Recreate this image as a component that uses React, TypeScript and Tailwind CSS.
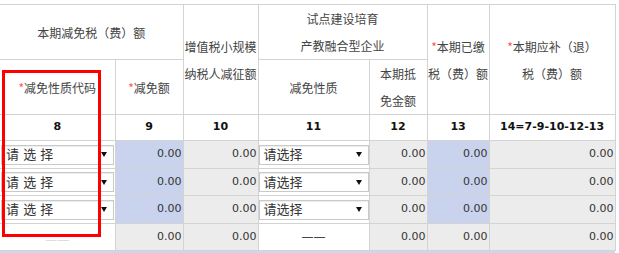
import React from 'react';

const line = 'border border-[#d3d3d3]';
const head = `${line} bg-white text-center align-middle font-normal text-[12px] leading-[27px] text-[#444]`;
const num = `${line} bg-white text-center align-middle font-bold text-[11px] text-[#111]`;
const money = 'text-right align-middle text-[11px] text-[#333] pr-[1px]';

function Star() {
    return <span className="text-[#f55]">*</span>;
}

function FakeSelect({ label }: { label: string }) {
    return (
        <div className="flex items-center justify-between h-[20px] bg-white border border-[#c9c9c9] shadow-[inset_0_1px_1px_rgba(0,0,0,0.08)] pl-[4px] pr-[6px]">
            <span className="text-[13px] leading-none text-[#333] whitespace-pre">{label}</span>
            <svg width="6" height="5" viewBox="0 0 6 5">
                <path d="M0 0 L6 0 L3 5 Z" fill="#111" />
            </svg>
        </div>
    );
}

const dataRows = [0, 1, 2];

export default function App() {
    return (
        <div
            className="relative w-[619px] h-[253px] bg-white pt-[4px] overflow-hidden"
            style={{ fontFamily: '"DejaVu Sans", "Noto Sans CJK SC", sans-serif' }}
        >
            <table className="table-fixed border-collapse w-[615px]">
                <colgroup>
                    <col className="w-[115px]" />
                    <col className="w-[68px]" />
                    <col className="w-[75px]" />
                    <col className="w-[111px]" />
                    <col className="w-[58px]" />
                    <col className="w-[62px]" />
                    <col className="w-[126px]" />
                </colgroup>
                <thead style={{ fontFamily: '"Noto Sans CJK SC", sans-serif' }}>
                    <tr className="h-[54px]">
                        <th colSpan={2} className={`${head} border-l-0`}>本期减免税（费）额</th>
                        <th rowSpan={2} className={head}>增值税小规模<br />纳税人减征额</th>
                        <th colSpan={2} className={head}>试点建设培育<br />产教融合型企业</th>
                        <th rowSpan={2} className={head}><Star />本期已缴<br />税（费）额</th>
                        <th rowSpan={2} className={head}><Star />本期应补（退）<br />税（费）额</th>
                    </tr>
                    <tr className="h-[55px]">
                        <th className={`${head} border-l-0`}><Star />减免性质代码</th>
                        <th className={head}><Star />减免额</th>
                        <th className={head}>减免性质</th>
                        <th className={head}>本期抵<br />免金额</th>
                    </tr>
                </thead>
                <tbody>
                    <tr className="h-[26px]">
                        <td className={`${num} border-l-0`}>8</td>
                        <td className={num}>9</td>
                        <td className={num}>10</td>
                        <td className={num}>11</td>
                        <td className={num}>12</td>
                        <td className={num}>13</td>
                        <td className={num}>14=7-9-10-12-13</td>
                    </tr>
                    {dataRows.map((i) => (
                        <tr key={i} className={i === 1 ? 'h-[27px]' : 'h-[28px]'}>
                            <td className={`${line} border-l-0 bg-white px-[1px] align-middle`}>
                                <FakeSelect label="请 选 择" />
                            </td>
                            <td className={`${line} bg-[#c9d3ee] ${money}`}>0.00</td>
                            <td className={`${line} bg-[#ececec] ${money}`}>0.00</td>
                            <td className={`${line} bg-white p-0 align-middle`}>
                                <FakeSelect label="请选择" />
                            </td>
                            <td className={`${line} bg-[#ececec] ${money}`}>0.00</td>
                            <td className={`${line} bg-[#c9d3ee] ${money}`}>0.00</td>
                            <td className={`${line} bg-[#ececec] ${money}`}>0.00</td>
                        </tr>
                    ))}
                    <tr className="h-[27px]">
                        <td className={`${line} border-l-0 bg-white text-center align-bottom text-[12px] leading-[20px] text-[#ddd]`}>——</td>
                        <td className={`${line} bg-[#ececec] ${money}`}>0.00</td>
                        <td className={`${line} bg-[#ececec] ${money}`}>0.00</td>
                        <td className={`${line} bg-white text-center align-middle text-[12px] text-[#444]`}>——</td>
                        <td className={`${line} bg-[#ececec] ${money}`}>0.00</td>
                        <td className={`${line} bg-[#ececec] ${money}`}>0.00</td>
                        <td className={`${line} bg-[#ececec] ${money}`}>0.00</td>
                    </tr>
                </tbody>
            </table>
            <div className="w-[615px] h-[6px] bg-[#cbd6f0]" />

            {/* red annotation box */}
            <div className="absolute left-[2px] top-[70px] w-[99px] h-[167px] border-[3px] border-[#ff0000]" />
        </div>
    );
}
